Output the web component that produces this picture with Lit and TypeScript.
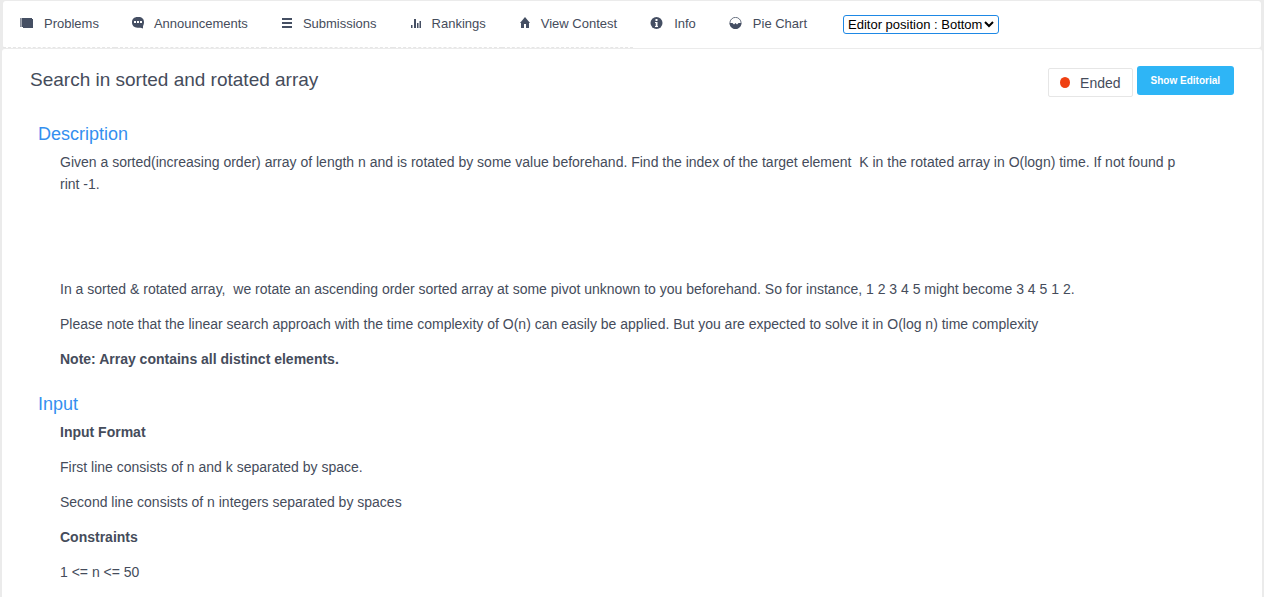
import { LitElement, html, css, svg } from "lit";
import { customElement } from "lit/decorators.js";
import { classMap } from "lit/directives/class-map.js";

const icons = {
  problems: svg`<path d="M0 1h1v9H0z" opacity=".65"/><path d="M1.500 1H12v1h1v9H3v-1H1.500z"/>`,
  announcements: svg`<path d="M5.500 0h1C10 0 12 2 12 5c0 1.800-.4 3-1 4v2.500L8.500 10.700h-3C2 10.700 0 8.500 0 5.300S2 0 5.500 0z"/><path fill="#fff" d="M2 4h2v2H2zM5 4h2v2H5zM8 4h2v2H8z"/>`,
  submissions: svg`<path d="M1 1h10v2H1zM1 5h10v2H1zM1 9h10v2H1z"/>`,
  rankings: svg`<path d="M1 8h1.500v3H1zM4 2h2v9H4zM7 6h1.500v5H7zM9.500 4H11v7H9.500z"/>`,
  contest: svg`<path d="M6 0l5 6h-1v5H7V7H5v4H2V6H1z"/>`,
  info: svg`<circle cx="6.500" cy="6" r="6"/><path fill="#fff" d="M5.500 2h2v2h-2zM5 5h2.500v4H8v1H5V9h.7V6H5z"/>`,
  pie: svg`<circle cx="6.500" cy="6" r="5.600" fill="none" stroke="#454f63" stroke-width=".8"/><path d="M.7 6h2.800l1.500 1.500L6.500 6 8 7.500 9.500 6h2.800c0 3.500-2.500 6-5.800 6S.7 9.500.7 6z"/>`,
};

const items = [
  { label: "Problems", icon: icons.problems, width: 14, dashed: true },
  { label: "Announcements", icon: icons.announcements, width: 12, dashed: true },
  { label: "Submissions", icon: icons.submissions, width: 12, dashed: true },
  { label: "Rankings", icon: icons.rankings, width: 12, dashed: true },
  { label: "View Contest", icon: icons.contest, width: 12, dashed: true },
  { label: "Info", icon: icons.info, width: 14, dashed: false },
  { label: "Pie Chart", icon: icons.pie, width: 14, dashed: false },
];

@customElement("app-root")
export class AppRoot extends LitElement {
  static styles = css`
    :host {
      display: block;
      box-sizing: border-box;
      min-height: 100vh;
      padding: 1px 2px 0;
      background: #ebebeb;
      color: #454c5b;
      font-family: "Liberation Sans", Arial, sans-serif;
    }
    * {
      box-sizing: border-box;
    }
    nav {
      display: flex;
      align-items: stretch;
      height: 47px;
      margin: 0 1px;
      border-radius: 3px;
      background: #fff;
      font-size: 13px;
    }
    .item {
      display: flex;
      align-items: center;
      gap: 10px;
      padding: 0 16px 1px 17px;
      border-bottom: 1px solid transparent;
      color: inherit;
      text-decoration: none;
      white-space: nowrap;
    }
    .dashed {
      border-bottom: 1px dashed #e6e6e6;
    }
    .item svg {
      flex: none;
      margin-bottom: 1px;
      fill: #454f63;
    }
    select {
      align-self: center;
      width: 156px;
      height: 19px;
      margin-left: 20px;
      padding: 0 0 1px 4px;
      appearance: none;
      border: 1px solid #1e88e5;
      border-radius: 3px;
      background: #fff
        url("data:image/svg+xml,%3Csvg xmlns='http://www.w3.org/2000/svg' width='10' height='7'%3E%3Cpath d='M1 1l4 4 4-4' fill='none' stroke='black' stroke-width='2'/%3E%3C/svg%3E")
        no-repeat right 4px center;
      color: #000;
      font: 13px "Liberation Sans", Arial, sans-serif;
    }
    main {
      min-height: calc(100vh - 49px);
      margin-top: 1px;
      padding: 17px 28px 8px;
      border-radius: 3px;
      background: #fff;
    }
    header {
      display: flex;
      justify-content: space-between;
      align-items: flex-start;
    }
    h1,
    h2 {
      margin: 0;
      font-weight: 400;
    }
    h1 {
      font-size: 19px;
      line-height: 28px;
    }
    .actions {
      display: flex;
      align-items: flex-start;
      gap: 4px;
    }
    .status {
      display: flex;
      align-items: center;
      gap: 10px;
      height: 29px;
      margin-top: 2px;
      padding: 0 11px;
      border: 1px solid #e6e6e6;
      border-radius: 2px;
      font-size: 14px;
    }
    .dot {
      width: 10px;
      height: 11px;
      border-radius: 50%;
      background: #ef4012;
    }
    button {
      height: 29px;
      padding: 0 14px;
      border: 0;
      border-radius: 3px;
      background: #2eb5f6;
      color: #fff;
      font: bold 10px "Liberation Sans", Arial, sans-serif;
    }
    section {
      padding: 0 22px 0 8px;
    }
    section:first-of-type {
      margin-top: 23px;
    }
    h2 {
      margin-bottom: 3px;
      color: #348fef;
      font-size: 18px;
      line-height: 28px;
    }
    .body {
      padding-left: 22px;
      font-size: 14px;
      line-height: 22px;
    }
    p {
      min-height: 22px;
      margin: 0 0 13px;
    }
    section + section {
      margin-top: 20px;
    }
  `;

  render() {
    return html`
      <nav>
        ${items.map(
          (item) => html`<a href="#" class=${classMap({ item: true, dashed: item.dashed })}>
            <svg width=${item.width} height="12" viewBox="0 0 ${item.width} 12" aria-hidden="true">${item.icon}</svg>
            <span>${item.label}</span>
          </a>`
        )}
        <select aria-label="Editor position">
          <option>Editor position : Bottom</option>
          <option>Editor position : Right</option>
        </select>
      </nav>
      <main>
        <header>
          <h1>Search in sorted and rotated array</h1>
          <div class="actions">
            <span class="status"><span class="dot"></span>Ended</span>
            <button type="button">Show Editorial</button>
          </div>
        </header>
        <section>
          <h2>Description</h2>
          <div class="body">
            <p>Given a sorted(increasing order) array of length n and is rotated by some value beforehand. Find the index of the target element&nbsp; K in the rotated array in O(logn) time. If not found p<br />rint -1.</p>
            <p></p>
            <p></p>
            <p>In a sorted &amp; rotated array,&nbsp; we rotate an ascending order sorted array at some pivot unknown to you beforehand. So for instance, 1 2 3 4 5 might become 3 4 5 1 2.</p>
            <p>Please note that the linear search approach with the time complexity of O(n) can easily be applied. But you are expected to solve it in O(log n) time complexity</p>
            <p><b>Note: Array contains all distinct elements.</b></p>
          </div>
        </section>
        <section>
          <h2>Input</h2>
          <div class="body">
            <p><b>Input Format</b></p>
            <p>First line consists of n and k separated by space.</p>
            <p>Second line consists of n integers separated by spaces</p>
            <p><b>Constraints</b></p>
            <p>1 &lt;= n &lt;= 50</p>
          </div>
        </section>
      </main>
    `;
  }
}
